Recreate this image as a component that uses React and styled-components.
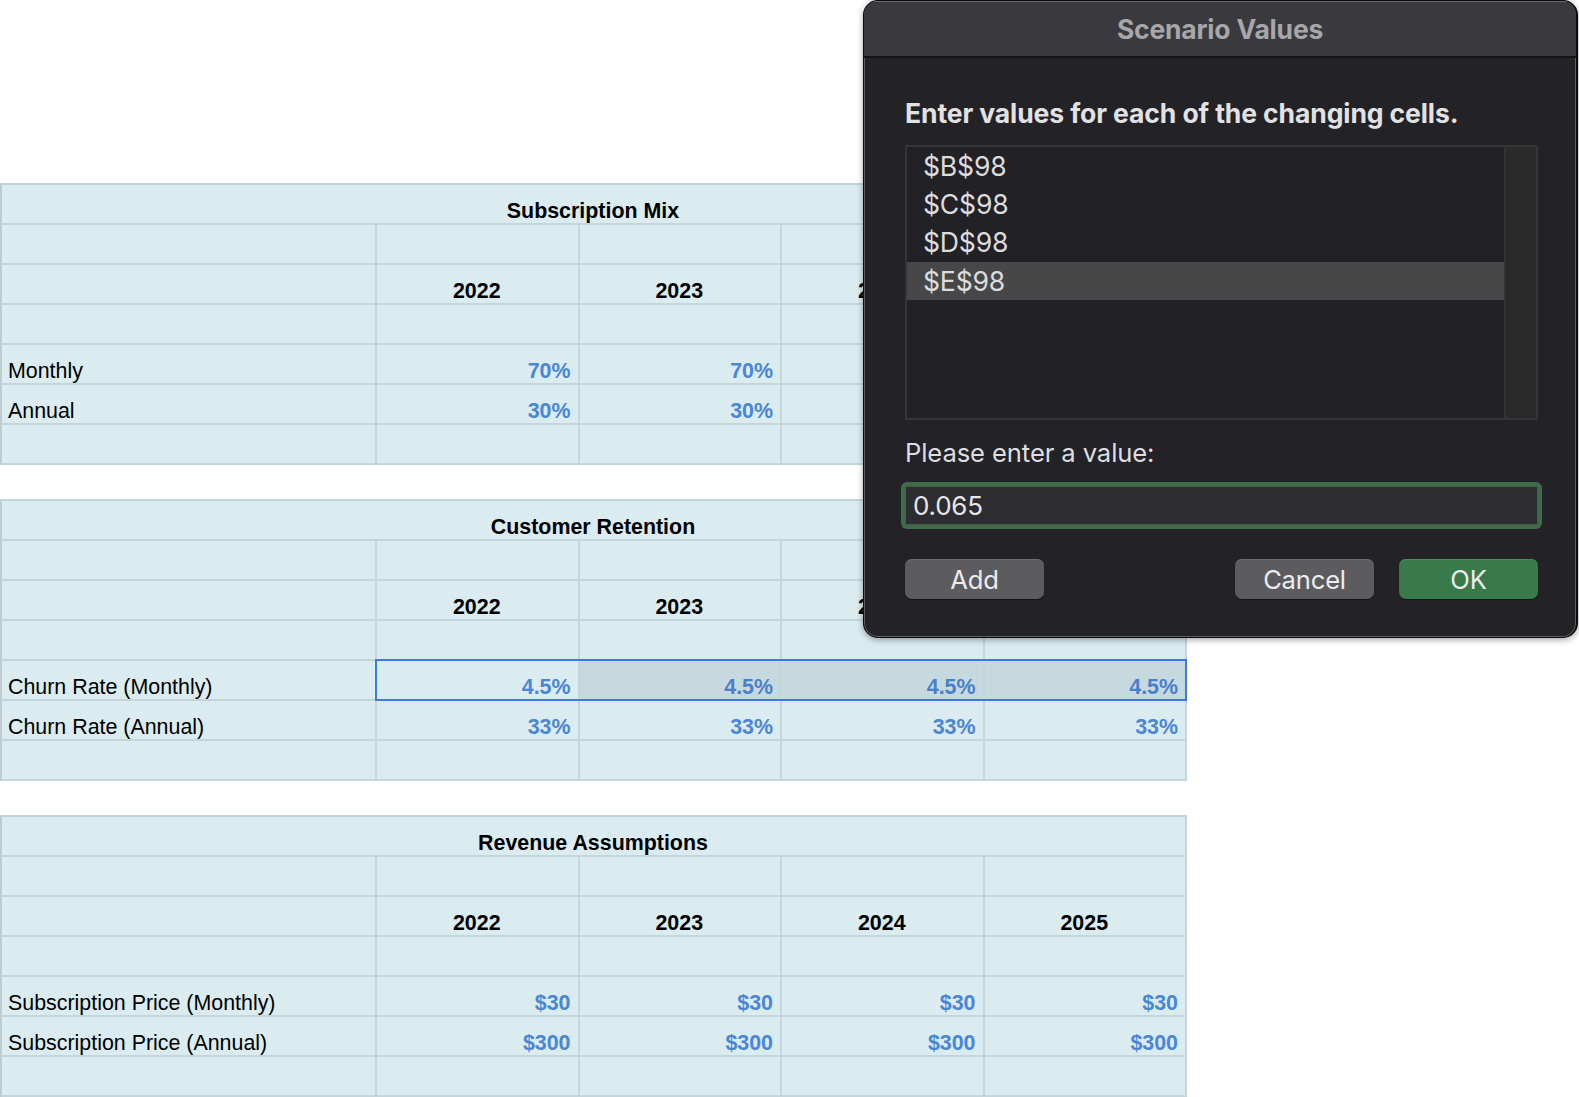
import React from "react";
import styled, { createGlobalStyle } from "styled-components";

const Global = createGlobalStyle`
  html, body { margin: 0; padding: 0; background: #ffffff; }
  body { font-family: "Liberation Sans", Arial, sans-serif; }
  * { box-sizing: border-box; }
`;

const Page = styled.div`
  position: relative;
  width: 1579px;
  height: 1097px;
  padding-top: 183px;
  display: flex;
  flex-direction: column;
  gap: 34px;
  overflow: hidden;
`;

const Sheet = styled.div`
  width: 1187px;
  flex: none;
  display: flex;
  flex-direction: column;
  border-top: 2px solid #c3d4d9;
  border-left: 2px solid #bfcdd1;
`;

const Row = styled.div`
  position: relative;
  display: grid;
  grid-template-columns: 375px repeat(4, 202.5px);
  height: 40px;
`;

const Cell = styled.div`
  display: flex;
  align-items: flex-end;
  justify-content: ${(p) => (p.$align === "right" ? "flex-end" : p.$align === "center" ? "center" : "flex-start")};
  padding: 0 7px 0 6px;
  background: ${(p) => (p.$selected ? "#c6d9df" : "#daecf0")};
  border-right: 2px solid #c5d6db;
  border-bottom: 2px solid #c5d6db;
  font-size: 21.4px;
  line-height: 24px;
  color: ${(p) => (p.$value ? (p.$selected ? "#4a7fcc" : "#4a86d6") : "#000")};
  font-weight: ${(p) => (p.$bold || p.$value ? 700 : 400)};
  white-space: nowrap;
`;

const TitleCell = styled(Cell)`
  grid-column: 1 / -1;
  justify-content: center;
  font-weight: 700;
`;

const SelectionFrame = styled.div`
  position: absolute;
  left: 373px;
  right: 0;
  top: -2px;
  bottom: 0;
  border: 2px solid #3d7ae6;
  pointer-events: none;
`;

const years = ["2022", "2023", "2024", "2025"];

function Blank() {
  return (
    <Row>
      <Cell />
      {years.map((y) => (
        <Cell key={y} />
      ))}
    </Row>
  );
}

function Table({ title, rows, selectedRow }) {
  return (
    <Sheet>
      <Row>
        <TitleCell>{title}</TitleCell>
      </Row>
      <Blank />
      <Row>
        <Cell />
        {years.map((y) => (
          <Cell key={y} $align="center" $bold>
            {y}
          </Cell>
        ))}
      </Row>
      <Blank />
      {rows.map((r, i) => (
        <Row key={r.label}>
          <Cell>{r.label}</Cell>
          {r.values.map((v, j) => (
            <Cell key={j} $align="right" $value $selected={selectedRow === i && j > 0}>
              {v}
            </Cell>
          ))}
          {selectedRow === i && <SelectionFrame />}
        </Row>
      ))}
      <Blank />
    </Sheet>
  );
}

/* Dialog */
const Dialog = styled.div`
  position: absolute;
  left: 863px;
  top: 0;
  width: 715px;
  height: 638px;
  border-radius: 15px;
  background: #232227;
  border: 1px solid #0b0b0c;
  border-right-width: 2px;
  box-shadow: inset 0 0 0 1px #5f5f62, 0 2px 6px rgba(0, 0, 0, 0.35);
  overflow: hidden;
  display: flex;
  flex-direction: column;
  font-family: Inter, "Liberation Sans", sans-serif;
`;

const TitleBar = styled.div`
  height: 57px;
  flex: none;
  display: flex;
  align-items: center;
  justify-content: center;
  background: #3a393d;
  border-bottom: 2px solid #141416;
  box-shadow: inset 0 1px 0 #6a6a6d;
  color: #a7a6aa;
  font-size: 26.5px;
  font-weight: 700;
  letter-spacing: -0.2px;
  padding-top: 1px;
`;

const Body = styled.div`
  flex: 1;
  display: flex;
  flex-direction: column;
  padding: 39px 38px 0 41px;
`;

const Heading = styled.div`
  color: #e2e2e4;
  font-size: 26.5px;
  font-weight: 700;
  line-height: 32px;
  letter-spacing: -0.1px;
`;

const ListBox = styled.div`
  margin-top: 16px;
  height: 275px;
  border: 2px solid #353438;
  background: #222126;
  display: flex;
`;

const ListItems = styled.div`
  flex: 1;
  display: flex;
  flex-direction: column;
`;

const ListItem = styled.div`
  height: 38.3px;
  display: flex;
  align-items: center;
  padding-left: 16px;
  padding-bottom: 1px;
  font-size: 26.6px;
  color: #dcdcde;
  background: ${(p) => (p.$active ? "#474748" : "transparent")};
  letter-spacing: -0.2px;
`;

const Scroll = styled.div`
  width: 32px;
  background: #2a2a2b;
  border-left: 2px solid #333335;
`;

const Prompt = styled.div`
  margin-top: 17px;
  color: #dedee0;
  font-size: 25.6px;
  line-height: 32px;
  letter-spacing: -0.1px;
`;

const InputRing = styled.div`
  margin: 13px -4px 0 -4px;
  height: 47px;
  border-radius: 6px;
  background: #3e6b48;
  padding: 4px;
`;

const Input = styled.div`
  height: 100%;
  background: #2d2c31;
  border: 1px solid #4a5a4d;
  display: flex;
  align-items: center;
  padding-left: 7px;
  font-size: 26px;
  color: #e6e6e8;
  letter-spacing: -0.2px;
`;

const Buttons = styled.div`
  margin-top: 30px;
  display: flex;
  align-items: center;
  gap: 25px;
`;

const Spacer = styled.div`
  flex: 1;
`;

const Button = styled.div`
  width: 139px;
  height: 40px;
  border-radius: 7px;
  display: flex;
  align-items: center;
  justify-content: center;
  background: ${(p) => (p.$primary ? "#387a4a" : "#5c5c5f")};
  box-shadow: inset 0 1px 0 ${(p) => (p.$primary ? "#4b8a5c" : "#6c6c6f")}, 0 1px 1px rgba(0, 0, 0, 0.4);
  color: #ececee;
  font-size: 25.6px;
  letter-spacing: -0.2px;
`;

export default function App() {
  return (
    <>
      <Global />
      <Page>
        <Table
          title="Subscription Mix"
          rows={[
            { label: "Monthly", values: ["70%", "70%", "70%", "70%"] },
            { label: "Annual", values: ["30%", "30%", "30%", "30%"] },
          ]}
        />
        <Table
          title="Customer Retention"
          selectedRow={0}
          rows={[
            { label: "Churn Rate (Monthly)", values: ["4.5%", "4.5%", "4.5%", "4.5%"] },
            { label: "Churn Rate (Annual)", values: ["33%", "33%", "33%", "33%"] },
          ]}
        />
        <Table
          title="Revenue Assumptions"
          rows={[
            { label: "Subscription Price (Monthly)", values: ["$30", "$30", "$30", "$30"] },
            { label: "Subscription Price (Annual)", values: ["$300", "$300", "$300", "$300"] },
          ]}
        />
        <Dialog>
          <TitleBar>Scenario Values</TitleBar>
          <Body>
            <Heading>Enter values for each of the changing cells.</Heading>
            <ListBox>
              <ListItems>
                <ListItem>$B$98</ListItem>
                <ListItem>$C$98</ListItem>
                <ListItem>$D$98</ListItem>
                <ListItem $active>$E$98</ListItem>
              </ListItems>
              <Scroll />
            </ListBox>
            <Prompt>Please enter a value:</Prompt>
            <InputRing>
              <Input>0.065</Input>
            </InputRing>
            <Buttons>
              <Button>Add</Button>
              <Spacer />
              <Button>Cancel</Button>
              <Button $primary>OK</Button>
            </Buttons>
          </Body>
        </Dialog>
      </Page>
    </>
  );
}
